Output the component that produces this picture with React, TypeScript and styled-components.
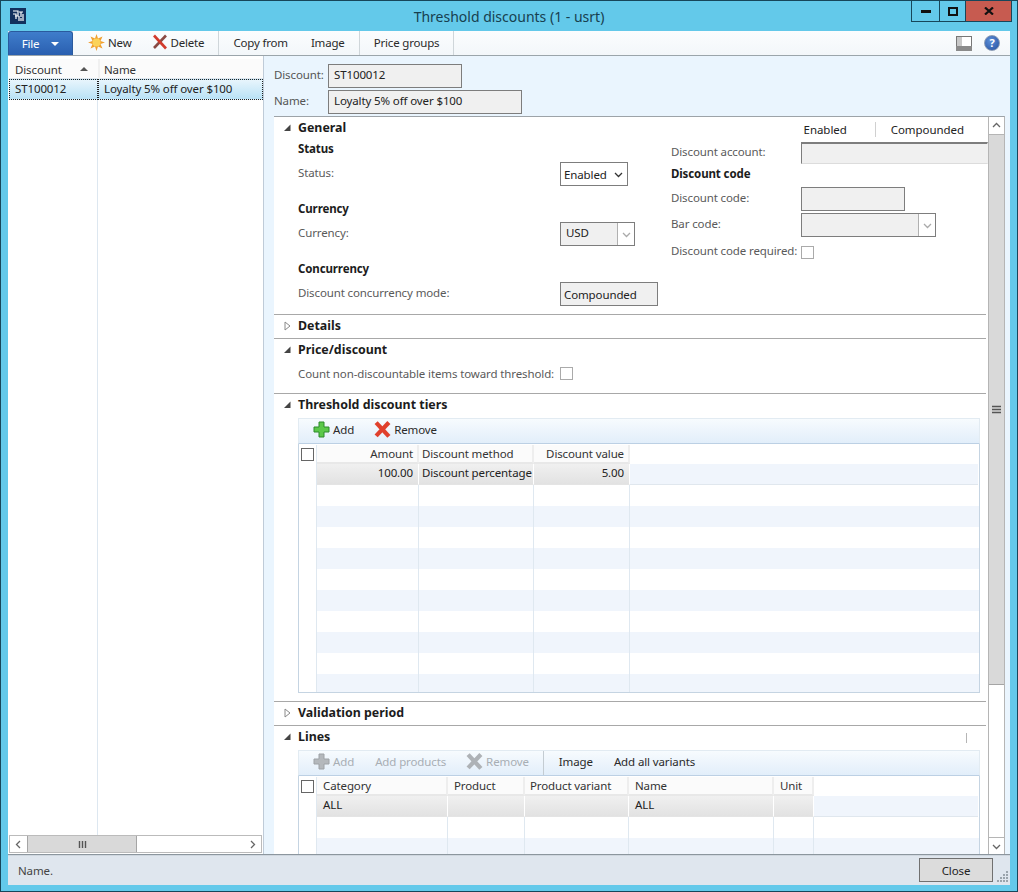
import React from "react";
import styled, { createGlobalStyle, css } from "styled-components";

const Global = createGlobalStyle`
  html, body { margin: 0; padding: 0; width: 1018px; height: 892px; overflow: hidden; background: #63c9ea; }
  * { box-sizing: border-box; }
  body { font-family: "Noto Sans", "Open Sans", sans-serif; font-size: 11.5px; letter-spacing: -0.12px; color: #222; }
`;

const Frame = styled.div`
  width: 1018px; height: 892px; display: flex; flex-direction: column;
  background: #63c9ea; border: 1px solid #17465a; padding: 0 7px 6px;
`;
const TitleBar = styled.header`
  height: 30px; flex: none; display: grid; grid-template-columns: 1fr auto 1fr; align-items: start;
`;
const Logo = styled.svg`margin: 7px 0 0 2px; display: block;`;
const Title = styled.h1`
  margin: 0; padding-top: 6px; font-size: 14px; font-weight: 400; color: #17404f; line-height: 20px; letter-spacing: 0;
`;
const Caption = styled.div`
  justify-self: end; display: flex; margin-right: -2px; height: 21px;
  border: 1px solid #17465a; border-top: 0;
`;
const CapBtn = styled.div<{ $w: number; $close?: boolean }>`
  width: ${p => p.$w}px; display: flex; align-items: center; justify-content: center;
  ${p => p.$close ? css`background: #c75b50;` : css`border-right: 1px solid #17465a;`}
`;

const Toolbar = styled.nav`
  height: 25px; flex: none; display: flex; align-items: stretch; letter-spacing: -0.18px;
  background: linear-gradient(#fbfdfe, #f3f7fa); border-bottom: 1px solid #9ba5ab;
`;
const FileBtn = styled.div`
  width: 65px; display: flex; align-items: center; justify-content: center; gap: 12px; color: #fff;
  background: linear-gradient(#3f7dcb, #2a5fb0); border-radius: 3px 3px 0 0; border: 1px solid #2a5a9e; border-bottom: 0;
`;
const ToolGroup = styled.div<{ $gap?: number; $start?: number }>`
  display: flex; align-items: center; gap: ${p => p.$gap ?? 20}px; padding: 0 14px 2px ${p => p.$start ?? 14}px; border-right: 1px solid #cfd6da; height: 24px;
`;
const ToolBtn = styled.span<{ $off?: boolean }>`
  display: inline-flex; align-items: center; gap: 3px; color: ${p => p.$off ? "#a8aeb4" : "#2a2a2a"}; white-space: nowrap;
`;
const ToolEnd = styled.div`
  margin-left: auto; display: flex; align-items: center; gap: 12px; padding-right: 10px;
`;
const HelpMark = styled.span`
  width: 16px; height: 16px; border-radius: 50%; background: radial-gradient(circle at 40% 35%, #5d8fd8, #24509f);
  border: 1px solid #8a9bb5; color: #fff; font-weight: 700; font-size: 11px; line-height: 14px; text-align: center;
`;

const Body = styled.main`
  flex: 1; min-height: 0; display: grid; grid-template-columns: 256px 1fr; background: #eaf5fe;
`;
const LeftPane = styled.aside`
  display: flex; flex-direction: column; background: #fff; border-right: 1px solid #bfcbd8; padding: 3px 0 1px 1px; min-height: 0;
`;
const ListHead = styled.div`
  height: 20px; flex: none; display: grid; grid-template-columns: 89px 1fr; background: #fbfbfb; border-bottom: 1px solid #dfe8f0;
`;
const ListHeadCell = styled.div`
  padding-left: 6px; line-height: 20px; display: flex; align-items: center; justify-content: space-between; padding-right: 10px;
  padding-top: 1px; color: #333; & + & { border-left: 2px solid #f0f0f0; padding-left: 4px; }
`;
const SortMark = styled.i`
  width: 0; height: 0; border: 4px solid transparent; border-top: 0; border-bottom: 4px solid #555; margin-top: -3px;
`;
const ListRows = styled.div`
  flex: 1; min-height: 0; display: grid; grid-template-columns: 89px 1fr; grid-template-rows: 21px 1fr;
`;
const ListCell = styled.div<{ $sel?: boolean; $first?: boolean }>`
  padding-left: 6px; line-height: 17px; color: #222;
  ${p => p.$sel && css`background: linear-gradient(#e8f5fc, #b9e2f6); border: 1px dotted #222; padding-left: 5px;`}
  ${p => p.$first && css`border-right: 1px solid #dde7f0;`}
`;
const HBar = styled.div`
  height: 18px; flex: none; display: flex; border: 1px solid #bbb; margin-right: 1px; background: #fff;
`;
const ArrowBtn = styled.div`
  width: 17px; flex: none; display: flex; align-items: center; justify-content: center; background: #fff;
`;
const HThumb = styled.div`
  width: 110px; background: #d9d9d9; border: 1px solid #a5a5a5; border-width: 0 1px; display: flex; align-items: center; justify-content: center;
`;
const Spacer = styled.div`flex: 1;`;

const RightPane = styled.section`
  display: flex; flex-direction: column; min-height: 0; padding: 8px 5px 0 10px;
`;
const HeadForm = styled.div`
  height: 52px; flex: none; display: flex; flex-direction: column; gap: 2px;
`;
const HeadRow = styled.div`
  display: grid; grid-template-columns: 54px auto; align-items: center;
  color: #555;
`;
const Field = styled.div<{ $w: number; $h?: number; $pad?: number; $left?: number; $sunken?: boolean }>`
  width: ${p => p.$w}px; height: ${p => p.$h ?? 24}px; background: #f0f0f0; border: 1px solid #7d7d7d;
  color: #222; padding: 0 0 ${p => p.$pad ?? 3}px ${p => p.$left ?? 5}px; display: flex; align-items: center; white-space: nowrap;
  ${p => p.$sunken && css`border-color: #7d7d7d #f0f0f0 #dcdcdc #7d7d7d; border-top-width: 2px;`}
`;
const Label = styled.span`padding-bottom: 3px;`;
const ScrollBox = styled.div`
  flex: 1; min-height: 0; display: grid; grid-template-columns: 1fr 16px; background: #fff;
  border-top: 1px solid #9da3a8; border-right: 1px solid #b5b5b5;
`;
const Sections = styled.div`
  min-width: 0; min-height: 0; overflow: hidden;
`;
const Section = styled.div<{ $h: number }>`
  height: ${p => p.$h}px; margin-right: 2px; border-bottom: 1px solid #a8a8a8;
`;
const SectionEnd = styled.div`margin-right: 2px;`;
const SecHead = styled.div`
  height: 21px; display: flex; align-items: center; font-weight: 700; color: #1c1c1c; font-size: 12.4px; letter-spacing: 0;
`;
const Twist = styled.span`
  width: 24px; padding-left: 10px; display: flex; align-items: center;
`;
const HeadTabs = styled.div`
  margin-left: auto; display: flex; align-items: center; font-weight: 400; font-size: 11.5px; letter-spacing: -0.06px; margin-top: 3px; margin-right: 22px;
`;
const HeadTab = styled.span`
  color: #222;
  & + & { margin-left: 28px; padding-left: 15px; border-left: 1px solid #d0d0d0; }
`;
const Columns = styled.div`
  display: grid; grid-template-columns: 373px 1fr; padding-left: 24px;
`;
const Col = styled.div`display: flex; flex-direction: column; margin-top: 1px;`;
const Group = styled.div`margin-bottom: 13px;`;
const Sub = styled.div`
  height: 23px; font-weight: 700; font-size: 11.5px; line-height: 20px; color: #1c1c1c;
`;
const FormRow = styled.div<{ $label: number; $top?: number }>`
  display: grid; grid-template-columns: ${p => p.$label}px auto; align-items: center; color: #5a5a5a; justify-items: start;
  margin-top: ${p => p.$top ?? 0}px;
`;
const RightCol = styled.div`display: flex; flex-direction: column; margin-top: 4px;`;
const SelectBox = styled.div<{ $w: number; $off?: boolean }>`
  width: ${p => p.$w}px; height: 24px; display: grid; grid-template-columns: 1fr auto; align-items: center;
  border: 1px solid #7d7d7d; background: ${p => p.$off ? "#f0f0f0" : "#fff"}; color: #222; padding-left: ${p => p.$off ? 5 : 3}px; white-space: nowrap;
`;
const SelectText = styled.span<{ $off?: boolean }>`
  padding-bottom: ${p => p.$off ? 3 : 0}px;
`;
const SelectArrow = styled.span<{ $off?: boolean }>`
  width: ${p => p.$off ? 17 : 18}px; height: 22px; display: flex; align-items: center; justify-content: center;
  ${p => p.$off && css`background: #fff; border-left: 1px solid #b0b0b0;`}
`;
const Check = styled.span`
  width: 13px; height: 13px; display: block; background: #fff; border: 1px solid #aaa;
`;
const GridCheck = styled.span`
  width: 13px; height: 13px; display: block; background: #fff; border: 1px solid #666;
`;
const Indent = styled.div`padding-left: 24px;`;
const InlineRow = styled.div`
  display: grid; grid-template-columns: 262px auto; align-items: center; color: #5a5a5a; margin-top: 6px; justify-items: start;
`;
const Panel = styled.div`
  margin: 3px 6px 0 24px;
`;
const SubBar = styled.div`
  height: 26px; display: flex; align-items: center; padding: 0 0 3px 14px;
  background: linear-gradient(#f7fbfe, #e2eefa); border: 1px solid #e2ebf2; border-bottom: 1px solid #bcd0e4;
`;
const SubSep = styled.span`
  width: 1px; height: 24px; background: #c4ccd2; margin: 3px 15px 0 14px;
`;
const GridWrap = styled.div<{ $h: number }>`
  height: ${p => p.$h}px; overflow: hidden; border-left: 1px solid #c5d4e2; border-right: 1px solid #c5d4e2;
  ${p => p.$h > 100 && css`border-bottom: 1px solid #c5d4e2;`} padding-top: 1px;
`;
const GridRow = styled.div<{ $cols: string; $head?: boolean; $alt?: boolean }>`
  display: grid; grid-template-columns: ${p => p.$cols}; height: ${p => p.$head ? 19 : 21}px;
  ${p => p.$alt && css`background: #f0f5fc;`}
`;
const GCell = styled.div<{ $right?: boolean; $head?: boolean; $sel?: boolean; $rest?: boolean; $chk?: boolean; $text?: number }>`
  padding: 0 5px; line-height: 18px; color: #222; white-space: nowrap; overflow: hidden;
  text-align: ${p => p.$right ? "right" : "left"};
  border-right: 1px solid #dfe8f0;
  ${p => p.$head && css`background: #fbfbfb; border-right: 2px solid #eeeeee; border-bottom: 2px solid #e8e8e8; color: #333; padding-left: ${p.$text ?? 3}px; padding-right: 4px; line-height: 18px;`}
  ${p => p.$sel && css`background: linear-gradient(#f0f0f0, #e2e2e2); border-right: 1px solid #fff; border-bottom: 1px solid #e4e4e4; padding-left: ${p.$text ?? 3}px;`}
  ${p => p.$rest && css`border-right: 0;`}
  ${p => p.$chk && css`padding: 3px 0 0 2px; background: #fff; border-right: 1px solid #dfe8f0;`}
`;
const MethodCell = styled(GCell)`padding-right: 0;`;
const RestSel = styled(GCell)`
  background: #f0f5fc; border-bottom: 1px solid #e0e7ee; border-right: 0; margin-right: 1px;
`;
const SmallTick = styled.span`
  width: 1px; height: 10px; background: #b5b5b5; margin-left: auto; margin-right: 19px; margin-top: 2px;
`;
const VBar = styled.div`
  display: flex; flex-direction: column; min-height: 0; border-left: 1px solid #b5b5b5; background: #fff;
`;
const VBtn = styled.div`
  height: 18px; flex: none; display: flex; align-items: center; justify-content: center; background: #fff; border-bottom: 1px solid #b5b5b5;
  &:last-child { border-bottom: 0; border-top: 1px solid #b5b5b5; height: 17px; }
`;
const VThumb = styled.div`
  height: 550px; flex: none; background: #d9d9d9; border-bottom: 1px solid #a5a5a5; display: flex; align-items: center; justify-content: center;
`;
const StatusBar = styled.footer`
  height: 31px; flex: none; display: flex; align-items: center; background: #dfe6ee; border-top: 1px solid #8c969e; padding: 0 1px 0 10px;
  box-shadow: inset 0 1px 0 #cfd7df; color: #444;
`;
const CloseBtn = styled.button`
  margin-left: auto; width: 74px; height: 24px; background: #dcdcdc; border: 1px solid #707070; font: inherit; letter-spacing: inherit; color: #222; padding: 0;
`;
const Grip = styled.svg`margin: 12px 0 0 4px; display: block;`;
const RemoveBtn = styled(ToolBtn)`margin-left: 20px;`;
const NextBtn = styled(ToolBtn)`margin-left: 21px;`;

const Chevron = ({ dir, color = "#666" }: { dir: "up" | "down" | "left" | "right"; color?: string }) => {
  const d = { up: "M1 6 L4.5 2.5 L8 6", down: "M1 3 L4.5 6.5 L8 3", left: "M6 1 L2.5 4.5 L6 8", right: "M3 1 L6.5 4.5 L3 8" }[dir];
  return <svg width="9" height="9" viewBox="0 0 9 9"><path d={d} fill="none" stroke={color} strokeWidth="1.3" /></svg>;
};
const Sun = () => (
  <svg width="17" height="17" viewBox="0 0 17 17">
    <path d="M8.5 0 L10 4.5 L14.5 2.5 L12.5 7 L17 8.5 L12.5 10 L14.5 14.5 L10 12.5 L8.5 17 L7 12.5 L2.5 14.5 L4.5 10 L0 8.5 L4.5 7 L2.5 2.5 L7 4.5 Z" fill="#f0a030" />
    <circle cx="8.5" cy="8.5" r="4" fill="#fbd35a" />
  </svg>
);
const Cross = ({ w = 16, sw = 2.6, color = "#d13a2c", shade = "#8a4a44" }: { w?: number; sw?: number; color?: string; shade?: string }) => (
  <svg width={w} height={w} viewBox="0 0 16 16">
    <path d="M2 14 L14 1.5" stroke={shade} strokeWidth={sw} fill="none" />
    <path d="M2 1.5 L14 14.5" stroke={color} strokeWidth={sw} fill="none" />
  </svg>
);
const Plus = ({ off }: { off?: boolean }) => (
  <svg width="17" height="17" viewBox="0 0 17 17">
    <path d="M6 1 H11 V6 H16 V11 H11 V16 H6 V11 H1 V6 H6 Z" fill={off ? "#b4b8bc" : "#5cc84a"} stroke={off ? "#9ea2a6" : "#2c8a2a"} />
  </svg>
);
const Tri = () => <svg width="7" height="7" viewBox="0 0 7 7"><path d="M0 7 H6.5 V0.5 Z" fill="#444" /></svg>;
const Open = () => <svg width="7" height="10" viewBox="0 0 7 10"><path d="M1 1 L6 5 L1 9 Z" fill="#fff" stroke="#8a8a8a" /></svg>;
const GripLines = ({ v }: { v?: boolean }) => (
  <svg width="9" height="9" viewBox="0 0 9 9">
    {v
      ? <path d="M0 1.5 H9 M0 4.5 H9 M0 7.5 H9" stroke="#555" strokeWidth="1.4" />
      : <path d="M1.5 1 V8 M4.5 1 V8 M7.5 1 V8" stroke="#555" strokeWidth="1.4" />}
  </svg>
);

const tierCols = "18px 102px 115px 96px 1fr";
const lineCols = "18px 131px 77px 104px 145px 40px 1fr";

const Row = ({ cols, n, cells }: { cols: string; n: number; cells: number }) => (
  <GridRow $cols={cols} $alt={n % 2 === 0}>
    {Array.from({ length: cells }).map((_, i) => i === 0
      ? <GCell key={i} $chk />
      : <GCell key={i} $rest={i === cells - 1} />)}
  </GridRow>
);

export default function App() {
  return (
    <Frame>
      <Global />
      <TitleBar>
        <Logo width="16" height="16" viewBox="0 0 16 16">
          <rect width="16" height="16" fill="#12305e" />
          <path d="M3 3 H8 V8 H5 M3 6 H6 V11 M9 4 H13 M11 4 V9 M9 13 V8 M11 13 V10 M13 13 V6" stroke="#fff" strokeWidth="1.2" fill="none" />
        </Logo>
        <Title>Threshold discounts (1 - usrt)</Title>
        <Caption>
          <CapBtn $w={28}><svg width="10" height="4"><rect width="10" height="3" y="1" fill="#111" /></svg></CapBtn>
          <CapBtn $w={26}><svg width="10" height="9"><rect x="1" y="1" width="8" height="7" fill="none" stroke="#111" strokeWidth="2" /></svg></CapBtn>
          <CapBtn $w={45} $close><svg width="10" height="8" viewBox="0 0 10 8"><path d="M1 0.5 L9 7.5 M9 0.5 L1 7.5" stroke="#111" strokeWidth="2.2" /></svg></CapBtn>
        </Caption>
      </TitleBar>

      <Toolbar>
        <FileBtn>
          <span>File</span>
          <svg width="8" height="4"><path d="M0 0 H8 L4 4 Z" fill="#fff" /></svg>
        </FileBtn>
        <ToolGroup $start={15}>
          <ToolBtn><Sun />New</ToolBtn>
          <ToolBtn><Cross />Delete</ToolBtn>
        </ToolGroup>
        <ToolGroup $gap={23}>
          <ToolBtn>Copy from</ToolBtn>
          <ToolBtn>Image</ToolBtn>
        </ToolGroup>
        <ToolGroup>
          <ToolBtn>Price groups</ToolBtn>
        </ToolGroup>
        <ToolEnd>
          <svg width="16" height="15" viewBox="0 0 16 15"><rect x=".5" y=".5" width="15" height="13" fill="#fff" stroke="#777" /><rect x="1" y="1" width="5" height="9" fill="#c8c8c8" /><rect x="0" y="10" width="16" height="5" fill="#8a8a8a" /></svg>
          <HelpMark>?</HelpMark>
        </ToolEnd>
      </Toolbar>

      <Body>
        <LeftPane>
          <ListHead>
            <ListHeadCell>Discount<SortMark /></ListHeadCell>
            <ListHeadCell>Name</ListHeadCell>
          </ListHead>
          <ListRows>
            <ListCell $sel>ST100012</ListCell>
            <ListCell $sel>Loyalty 5% off over $100</ListCell>
            <ListCell $first />
            <ListCell />
          </ListRows>
          <HBar>
            <ArrowBtn><Chevron dir="left" /></ArrowBtn>
            <HThumb><GripLines /></HThumb>
            <Spacer />
            <ArrowBtn><Chevron dir="right" /></ArrowBtn>
          </HBar>
        </LeftPane>

        <RightPane>
          <HeadForm>
            <HeadRow><Label>Discount:</Label><Field $w={134}>ST100012</Field></HeadRow>
            <HeadRow><Label>Name:</Label><Field $w={194}>Loyalty 5% off over $100</Field></HeadRow>
          </HeadForm>
          <ScrollBox>
            <Sections>
              <Section $h={198}>
                <SecHead>
                  <Twist><Tri /></Twist>General
                  <HeadTabs><HeadTab>Enabled</HeadTab><HeadTab>Compounded</HeadTab></HeadTabs>
                </SecHead>
                <Columns>
                  <Col>
                    <Group>
                      <Sub>Status</Sub>
                      <FormRow $label={262}><Label>Status:</Label>
                        <SelectBox $w={68}><SelectText>Enabled</SelectText><SelectArrow><Chevron dir="down" color="#333" /></SelectArrow></SelectBox>
                      </FormRow>
                    </Group>
                    <Group>
                      <Sub>Currency</Sub>
                      <FormRow $label={262}><Label>Currency:</Label>
                        <SelectBox $w={75} $off><SelectText $off>USD</SelectText><SelectArrow $off><Chevron dir="down" color="#aaa" /></SelectArrow></SelectBox>
                      </FormRow>
                    </Group>
                    <Group>
                      <Sub>Concurrency</Sub>
                      <FormRow $label={262}><Label>Discount concurrency mode:</Label>
                        <Field $w={98} $pad={0} $left={3}>Compounded</Field>
                      </FormRow>
                    </Group>
                  </Col>
                  <RightCol>
                    <FormRow $label={130}><Label>Discount account:</Label>
                      <Field $w={187} $h={22} $sunken />
                    </FormRow>
                    <Sub>Discount code</Sub>
                    <FormRow $label={130}><Label>Discount code:</Label>
                      <Field $w={104} />
                    </FormRow>
                    <FormRow $label={130} $top={2}><Label>Bar code:</Label>
                      <SelectBox $w={135} $off><span /><SelectArrow $off><Chevron dir="down" color="#aaa" /></SelectArrow></SelectBox>
                    </FormRow>
                    <FormRow $label={130} $top={6}><Label>Discount code required:</Label>
                      <Check />
                    </FormRow>
                  </RightCol>
                </Columns>
              </Section>

              <Section $h={24}>
                <SecHead><Twist><Open /></Twist>Details</SecHead>
              </Section>

              <Section $h={55}>
                <SecHead><Twist><Tri /></Twist>Price/discount</SecHead>
                <Indent>
                  <InlineRow>Count non-discountable items toward threshold:<Check /></InlineRow>
                </Indent>
              </Section>

              <Section $h={308}>
                <SecHead><Twist><Tri /></Twist>Threshold discount tiers</SecHead>
                <Panel>
                  <SubBar>
                    <ToolBtn><Plus />Add</ToolBtn>
                    <RemoveBtn><Cross w={17} sw={4} color="#e0402c" shade="#e0402c" />Remove</RemoveBtn>
                  </SubBar>
                  <GridWrap $h={249}>
                    <GridRow $cols={tierCols} $head>
                      <GCell $chk><GridCheck /></GCell>
                      <GCell $head $right>Amount</GCell>
                      <GCell $head>Discount method</GCell>
                      <GCell $head $right>Discount value</GCell>
                      <GCell $rest />
                    </GridRow>
                    <GridRow $cols={tierCols}>
                      <GCell $chk />
                      <GCell $sel $right>100.00</GCell>
                      <MethodCell $sel>Discount percentage</MethodCell>
                      <GCell $sel $right>5.00</GCell>
                      <RestSel />
                    </GridRow>
                    {Array.from({ length: 10 }).map((_, i) => <Row key={i} cols={tierCols} n={i + 1} cells={5} />)}
                  </GridWrap>
                </Panel>
              </Section>

              <Section $h={24}>
                <SecHead><Twist><Open /></Twist>Validation period</SecHead>
              </Section>

              <SectionEnd>
                <SecHead>
                  <Twist><Tri /></Twist>Lines
                  <SmallTick />
                </SecHead>
                <Panel>
                  <SubBar>
                    <ToolBtn $off><Plus off />Add</ToolBtn>
                    <NextBtn $off>Add products</NextBtn>
                    <RemoveBtn $off><Cross w={17} sw={4} color="#aeb2b6" shade="#aeb2b6" />Remove</RemoveBtn>
                    <SubSep />
                    <ToolBtn>Image</ToolBtn>
                    <NextBtn>Add all variants</NextBtn>
                  </SubBar>
                  <GridWrap $h={80}>
                    <GridRow $cols={lineCols} $head>
                      <GCell $chk><GridCheck /></GCell>
                      <GCell $head $text={6}>Category</GCell>
                      <GCell $head $text={6}>Product</GCell>
                      <GCell $head $text={5}>Product variant</GCell>
                      <GCell $head $text={6}>Name</GCell>
                      <GCell $head $text={6}>Unit</GCell>
                      <GCell $rest />
                    </GridRow>
                    <GridRow $cols={lineCols}>
                      <GCell $chk />
                      <GCell $sel $text={6}>ALL</GCell>
                      <GCell $sel />
                      <GCell $sel />
                      <GCell $sel $text={6}>ALL</GCell>
                      <GCell $sel />
                      <RestSel />
                    </GridRow>
                    <Row cols={lineCols} n={1} cells={7} />
                    <Row cols={lineCols} n={2} cells={7} />
                  </GridWrap>
                </Panel>
              </SectionEnd>
            </Sections>
            <VBar>
              <VBtn><Chevron dir="up" /></VBtn>
              <VThumb><GripLines v /></VThumb>
              <Spacer />
              <VBtn><Chevron dir="down" /></VBtn>
            </VBar>
          </ScrollBox>
        </RightPane>
      </Body>

      <StatusBar>
        Name.
        <CloseBtn>Close</CloseBtn>
        <Grip width="12" height="12" viewBox="0 0 12 12">
          <path d="M9 1h2v2H9zM6 4h2v2H6zM9 4h2v2H9zM3 7h2v2H3zM6 7h2v2H6zM9 7h2v2H9zM0 10h2v2H0zM3 10h2v2H3zM6 10h2v2H6zM9 10h2v2H9z" fill="#9aa4ac" />
        </Grip>
      </StatusBar>
    </Frame>
  );
}
